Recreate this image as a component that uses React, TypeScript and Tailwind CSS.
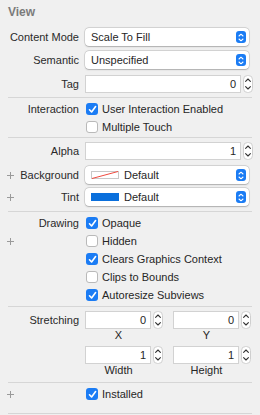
import React from 'react';

const Plus = () => (
  <svg width="7" height="7" viewBox="0 0 7 7" className="shrink-0">
    <path d="M3.5 0v7M0 3.5h7" stroke="#9a9a9a" strokeWidth="1" />
  </svg>
);

function Label({ text, plus }: { text?: string; plus?: boolean }) {
  return (
    <div className="w-[79px] h-[18px] shrink-0 flex items-center pl-[7px]">
      {plus ? <Plus /> : null}
      <div className="flex-1 text-right text-[#2a2a2a] whitespace-nowrap">{text}</div>
    </div>
  );
}

const Check = ({ on }: { on?: boolean }) =>
  on ? (
    <div className="w-[12px] h-[12px] rounded-[3px] bg-[#1b7cf4] flex items-center justify-center shrink-0">
      <svg width="9" height="9" viewBox="0 0 9 9">
        <path d="M1.5 4.8 L3.6 7 L7.6 1.6" fill="none" stroke="white" strokeWidth="1.6" strokeLinecap="round" strokeLinejoin="round" />
      </svg>
    </div>
  ) : (
    <div className="w-[12px] h-[12px] rounded-[3px] bg-white border border-[#b9b9b9] shrink-0" />
  );

function CheckRow({ label, on, title, plus }: { label: string; on?: boolean; title?: string; plus?: boolean }) {
  return (
    <div className="h-[18px] flex items-center gap-[6px]">
      <Label text={title} plus={plus} />
      <div className="flex items-center gap-[4px] pl-[1px]">
        <Check on={on} />
        <span className="text-[#262626] whitespace-nowrap">{label}</span>
      </div>
    </div>
  );
}

const Stepper = () => (
  <svg width="10" height="18" viewBox="0 0 10 18" className="shrink-0">
    <rect x="0.5" y="0.5" width="9" height="17" rx="4" fill="white" stroke="#cfcfcf" />
    <path d="M2.6 6.4 L5 4 L7.4 6.4" fill="none" stroke="#333" strokeWidth="1.1" strokeLinecap="round" strokeLinejoin="round" />
    <path d="M2.6 11.6 L5 14 L7.4 11.6" fill="none" stroke="#333" strokeWidth="1.1" strokeLinecap="round" strokeLinejoin="round" />
  </svg>
);

function NumField({ value, w }: { value: string; w: string }) {
  return (
    <div className="flex items-center gap-[2px]">
      <div className={`${w} h-[18px] bg-white border border-[#d2d2d2] flex items-center justify-end pr-[4px] text-[#262626]`}>
        {value}
      </div>
      <Stepper />
    </div>
  );
}

function Popup({ children }: { children: React.ReactNode }) {
  return (
    <div className="w-[164px] h-[18px] bg-white rounded-[4px] shadow-[0_0_0_0.5px_rgba(0,0,0,0.18),0_0.5px_1.5px_rgba(0,0,0,0.2)] flex items-center pl-[6px] pr-[3px]">
      <div className="flex-1 flex items-center gap-[5px] text-[#262626] whitespace-nowrap">{children}</div>
      <div className="w-[10px] h-[12px] rounded-[3px] bg-[#1b7cf4] flex items-center justify-center">
        <svg width="6" height="9" viewBox="0 0 6 9">
          <path d="M1 3 L3 1.2 L5 3 M1 6 L3 7.8 L5 6" fill="none" stroke="white" strokeWidth="1.1" strokeLinecap="round" strokeLinejoin="round" />
        </svg>
      </div>
    </div>
  );
}

const Sep = ({ className }: { className: string }) => <div className={`mx-[8px] h-px bg-[#d6d6d6] ${className}`} />;

export default function App() {
  return (
    <div className="w-[260px] h-[415px] bg-[#f0f0f0] overflow-hidden text-[11px] leading-[13px] font-['Liberation_Sans',Arial,sans-serif]">
      <div className="h-[28px] pt-[5px] pl-[8px] text-[12px] leading-[14px] font-bold text-[#7b7b7b]">View</div>

      <div className="h-[18px] flex items-center gap-[6px]">
        <Label text="Content Mode" />
        <Popup>Scale To Fill</Popup>
      </div>
      <div className="h-[18px] mt-[5px] flex items-center gap-[6px]">
        <Label text="Semantic" />
        <Popup>Unspecified</Popup>
      </div>
      <div className="h-[18px] mt-[6px] flex items-center gap-[6px]">
        <Label text="Tag" />
        <NumField value="0" w="w-[156px]" />
      </div>

      <Sep className="mt-[4px]" />
      <div className="mt-[2px]">
        <CheckRow title="Interaction" label="User Interaction Enabled" on />
        <CheckRow label="Multiple Touch" />
      </div>

      <Sep className="mt-[1px]" />
      <div className="h-[18px] mt-[4px] flex items-center gap-[6px]">
        <Label text="Alpha" />
        <NumField value="1" w="w-[156px]" />
      </div>
      <div className="h-[18px] mt-[6px] flex items-center gap-[6px]">
        <Label text="Background" plus />
        <Popup>
          <svg width="28" height="8" viewBox="0 0 28 8" className="shrink-0">
            <rect x="0.5" y="0.5" width="27" height="7" fill="white" stroke="#c8c8c8" />
            <path d="M1 7.5 L27 0.5" stroke="#f04a3f" strokeWidth="1" />
          </svg>
          <span>Default</span>
        </Popup>
      </div>
      <div className="h-[18px] mt-[4px] flex items-center gap-[6px]">
        <Label text="Tint" plus />
        <Popup>
          <div className="w-[28px] h-[8px] bg-[#0a6fdc] shrink-0" />
          <span>Default</span>
        </Popup>
      </div>

      <Sep className="mt-[5px]" />
      <div className="mt-[2px]">
        <CheckRow title="Drawing" label="Opaque" on />
        <CheckRow label="Hidden" plus />
        <CheckRow label="Clears Graphics Context" on />
        <CheckRow label="Clips to Bounds" />
        <CheckRow label="Autoresize Subviews" on />
      </div>

      <Sep className="mt-[2px]" />
      <div className="mt-[4px] flex items-start gap-[6px]">
        <Label text="Stretching" />
        <div className="grid grid-cols-[78px_78px] gap-x-[10px] text-[#262626]">
          <NumField value="0" w="w-[67px]" />
          <NumField value="0" w="w-[67px]" />
          <div className="w-[67px] h-[12px] text-center">X</div>
          <div className="w-[67px] h-[12px] text-center">Y</div>
          <div className="mt-[5px]"><NumField value="1" w="w-[67px]" /></div>
          <div className="mt-[5px]"><NumField value="1" w="w-[67px]" /></div>
          <div className="w-[67px] h-[12px] text-center">Width</div>
          <div className="w-[67px] h-[12px] text-center">Height</div>
        </div>
      </div>

      <Sep className="mt-[6px]" />
      <div className="mt-[2px]">
        <CheckRow label="Installed" on plus />
      </div>
      <Sep className="mt-[10px]" />
    </div>
  );
}
